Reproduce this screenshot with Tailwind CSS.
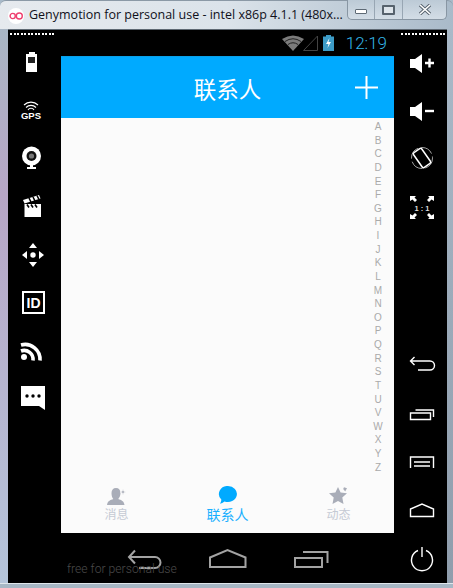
<!DOCTYPE html>
<html><head><meta charset="utf-8"><script src="https://cdn.jsdelivr.net/npm/@tailwindcss/browser@4"></script></head>
<body class="w-[453px] h-[588px] overflow-hidden bg-[#a9bac9]">
<div class="flex flex-col w-[453px] h-[588px]">
  <!-- title bar -->
  <div class="flex h-[29px] shrink-0 items-start bg-linear-to-r from-[#e6eaee] via-[#dbe3ea] to-[#a9bac9] border-t border-[#8b99a6] rounded-t-[6px]">
    <div class="flex items-center justify-center ml-[8px] mt-[7px] w-[16px] h-[16px] rounded-full bg-white shrink-0">
      <svg width="14" height="8" viewBox="0 0 14 8" fill="none" stroke="#ef3f6f" stroke-width="1.4"><circle cx="3.7" cy="4" r="2.6"/><circle cx="10.3" cy="4" r="3"/></svg>
    </div>
    <div class="ml-[5px] mt-[5px] w-[314px] whitespace-nowrap text-[12.5px] leading-[18px] text-[#10101a] font-['Open_Sans','Noto_Sans',sans-serif]">Genymotion for personal use - intel x86p 4.1.1 (480x...</div>
    <div class="flex ml-[4px] w-[100px] h-[20px] -mt-px border border-t-0 border-[#8896a3] rounded-b-[5px] bg-linear-to-b from-[#bccad6] to-[#d3dde6]">
      <div class="flex items-center justify-center w-[27px] border-r border-[#98a6b3]"><div class="w-[12px] h-[5px] bg-white border border-[#5e6a75] rounded-[1px] mt-[4px]"></div></div>
      <div class="flex items-center justify-center w-[28px] border-r border-[#98a6b3]"><div class="w-[13px] h-[10px] bg-white/40 border-2 border-[#56626d] rounded-[1px]"></div></div>
      <div class="flex items-center justify-center flex-1">
        <svg width="14" height="11" viewBox="0 0 14 11"><path d="M2 1 L12 10 M12 1 L2 10" stroke="#56626d" stroke-width="3.4"/><path d="M2 1 L12 10 M12 1 L2 10" stroke="#fff" stroke-width="1.6"/></svg>
      </div>
    </div>
  </div>
  <!-- body row -->
  <div class="flex h-[554px] shrink-0">
    <div class="w-[8px] shrink-0 bg-linear-to-b from-[#a9b6c4] via-[#b7a6c6] via-30% to-[#b4c4da]"></div>
    <div class="relative flex w-[439px] shrink-0 bg-black border-t border-[#5e6973]">
      <!-- left column -->
      <div class="w-[53px] shrink-0 pl-[9px] pt-[16px] flex flex-col items-start">
        <div class="flex gap-[1.5px] absolute left-[2px] top-[3px]"><i class="w-[2px] h-[2px] bg-white block"></i><i class="w-[2px] h-[2px] bg-white block"></i><i class="w-[2px] h-[2px] bg-white block"></i><i class="w-[2px] h-[2px] bg-white block"></i><i class="w-[2px] h-[2px] bg-white block"></i><i class="w-[2px] h-[2px] bg-white block"></i><i class="w-[2px] h-[2px] bg-white block"></i><i class="w-[2px] h-[2px] bg-white block"></i><i class="w-[2px] h-[2px] bg-white block"></i><i class="w-[2px] h-[2px] bg-white block"></i><i class="w-[2px] h-[2px] bg-white block"></i><i class="w-[2px] h-[2px] bg-white block"></i><i class="w-[2px] h-[2px] bg-white block"></i></div>
        <svg class="block" width="32" height="32" viewBox="0 0 32 32"><path fill="#fff" d="M12 6h6v2h2v18H9V8h3z"/><rect x="11" y="11" width="7" height="6" fill="#222"/></svg>
        <svg class="block mt-[16px]" width="32" height="32" viewBox="0 0 32 32" fill="none" stroke="#fff"><path stroke-width="1.1" d="M7 11a10 10 0 0 1 14 0M9 13.5a7 7 0 0 1 10 0M11 16a3.5 3.5 0 0 1 6 0"/><text x="14" y="25" text-anchor="middle" font-family="Liberation Sans" font-weight="700" font-size="9.5" fill="#fff" stroke="none">GPS</text></svg>
        <svg class="block mt-[16px]" width="32" height="32" viewBox="0 0 32 32"><circle cx="14.5" cy="14" r="9.5" fill="#fff"/><circle cx="14.5" cy="14" r="5" fill="#111"/><circle cx="14.5" cy="14" r="2.6" fill="#777"/><path fill="#fff" d="M13 22h3v3h3v2h-9v-2h3z"/></svg>
        <svg class="block mt-[16px]" width="32" height="32" viewBox="0 0 32 32"><path fill="#fff" d="M7.500 14h16.500v13H7.500z"/><path fill="#fff" d="M6 10 22 5l1.500 3.500-16 5z"/><path stroke="#000" stroke-width="1.6" d="M12 8l2 4M16 7l2 4M20 5.500l2 4M10 14.500l2 3M14 14.500l2 3M18 14.500l2 3"/></svg>
        <svg class="block mt-[17px]" width="32" height="32" viewBox="0 0 32 32" fill="#fff"><path d="M16 4l4 5h-8zM16 28l-4-5h8zM5 16l5-4v8zM27 16l-5 4v-8z"/><circle cx="16" cy="16" r="2.700"/></svg>
        <svg class="block mt-[16px]" width="32" height="32" viewBox="0 0 32 32"><rect x="6" y="5" width="21" height="21" fill="none" stroke="#fff" stroke-width="2"/><text x="16.500" y="21" text-anchor="middle" font-family="Liberation Sans" font-weight="700" font-size="14" fill="#fff">ID</text></svg>
        <svg class="block mt-[14px]" width="32" height="32" viewBox="0 0 32 32" fill="none" stroke="#fff" stroke-width="3.600"><path d="M4 12a15 15 0 0 1 19 15.500M4 18a9 9 0 0 1 12 9.500"/><circle cx="7" cy="24" r="3" fill="#fff" stroke="none"/></svg>
        <svg class="block mt-[17px]" width="32" height="32" viewBox="0 0 32 32"><path fill="#fff" d="M4 4h24v24l-6-4H4z"/><circle cx="10" cy="14" r="1.700" fill="#000"/><circle cx="16" cy="14" r="1.700" fill="#000"/><circle cx="22" cy="14" r="1.700" fill="#000"/></svg>
      </div>
      <!-- centre -->
      <div class="w-[333px] shrink-0 flex flex-col">
        <div class="h-[26px] shrink-0 flex items-center justify-end pr-[7px]">
          <svg width="38" height="16" viewBox="0 0 38 16" class="mr-[3px]"><path fill="#7c7c7c" d="M0 4 Q11 -3 22 4 L11 16z"/><path d="M3 6.500 Q11 1 19 6.500M6 9.500Q11 6 16 9.500" stroke="#222" stroke-width="1" fill="none"/><path d="M21.500 15.500 35.500 1v14.500z" fill="none" stroke="#444" stroke-width="1"/></svg>
          <svg width="11" height="16" viewBox="0 0 11 16" class="mr-[12px]"><path fill="#3d9cc7" d="M3 0h5v1.500h3V16H0V1.500h3z"/><path fill="#fff" d="M6.500 3 3 9h2.500L4.500 13 8 7H5.500z"/></svg>
          <div class="text-[17px] leading-[20px] text-[#33b5e5] font-['Roboto',sans-serif] font-light">12:19</div>
        </div>
        <div class="h-[62px] shrink-0 relative flex items-center justify-center bg-[#00aaff] border-t border-[#0aa0e8]">
          <div class="text-[22.5px] leading-[30px] text-white font-['Noto_Sans_CJK_SC',sans-serif]">联系人</div>
          <svg class="absolute right-[16px] top-[19px]" width="23" height="23" viewBox="0 0 23 23"><path d="M0 11.500H23M11.500 0V23" stroke="#fff" stroke-width="2"/></svg>
        </div>
        <div class="h-[356px] shrink-0 flex justify-end bg-[#fbfbfb]">
          <div class="w-[16px] mr-[8px] pt-[4px] pb-[1px] flex flex-col justify-between items-center text-[10px] leading-[10px] text-[#aaaaaa] font-['Liberation_Sans',sans-serif]">
            <span>A</span><span>B</span><span>C</span><span>D</span><span>E</span><span>F</span><span>G</span><span>H</span><span>I</span><span>J</span><span>K</span><span>L</span><span>M</span><span>N</span><span>O</span><span>P</span><span>Q</span><span>R</span><span>S</span><span>T</span><span>U</span><span>V</span><span>W</span><span>X</span><span>Y</span><span>Z</span>
          </div>
        </div>
        <div class="h-[59px] shrink-0 grid grid-cols-3 bg-[#fbfbfb] font-['Noto_Sans_CJK_SC',sans-serif]">
          <div class="flex flex-col items-center pt-[13px]">
            <svg width="20" height="19" viewBox="0 0 20 19"><path fill="#a9adb8" d="M9 1c3 0 4.500 2 4.500 5s-1.300 5-2.300 6c3 1 5.800 2 6.300 6H0c.5-4 3.300-5 6.300-6C5.300 11 4.500 9 4.500 6S6 1 9 1z"/><path fill="#a9adb8" d="M16 2l.8 2.200L19 5l-2.200.8L16 8l-.8-2.200L13 5l2.200-.8z" stroke="#fbfbfb" stroke-width=".6"/></svg>
            <div class="text-[12px] leading-[16px] text-[#c5cad4]">消息</div>
          </div>
          <div class="flex flex-col items-center pt-[12px]">
            <svg width="20" height="19" viewBox="0 0 20 19"><path fill="#00aaff" d="M10 0a9 8 0 1 1-3.500 15.400C5 16.500 3.500 17.300 2 17.800c.8-1.300 1.400-2.800 1.300-4.300A8.500 8 0 0 1 10 0z"/></svg>
            <div class="text-[14px] leading-[18px] text-[#1ab0ff]">联系人</div>
          </div>
          <div class="flex flex-col items-center pt-[13px]">
            <svg width="20" height="19" viewBox="0 0 20 19"><path fill="#a9adb8" d="M9 0l2.600 5.500 6.400.8-4.700 4.300 1.200 6.400L9 14l-5.500 3 1.200-6.400L0 6.300l6.400-.8z"/><path fill="#fbfbfb" d="M13 0h6v4l-3 1z"/><path fill="#a9adb8" d="M15 .2l3 1-1.800 3.200-2-2.300z"/></svg>
            <div class="text-[12px] leading-[16px] text-[#c5cad4]">动态</div>
          </div>
        </div>
        <div class="h-[51px] shrink-0 relative">
          <svg class="absolute left-0 top-0" width="333" height="50" viewBox="0 0 333 50" fill="none" stroke="#a3a3a3" stroke-width="2">
            <path d="M74 17.500 68 24 74 30.500M68 24H94a5.500 5.500 0 0 1 0 11H78"/>
            <path d="M149 34V24.500L166.500 17l18 7.500V34z"/>
            <path d="M234 25h27v9h-27zM242 19h24.500v11"/>
          </svg>
          <div class="absolute left-[6px] top-[29px] text-[12.2px] leading-[14px] text-[#4a4a4a] font-['Roboto',sans-serif] font-light whitespace-nowrap">free for personal use</div>
        </div>
      </div>
      <!-- right column -->
      <div class="flex-1 pl-[12px] pt-[17px] flex flex-col items-start">
        <div class="flex gap-[1.5px] absolute right-[2px] top-[3px]"><i class="w-[2px] h-[2px] bg-white block"></i><i class="w-[2px] h-[2px] bg-white block"></i><i class="w-[2px] h-[2px] bg-white block"></i><i class="w-[2px] h-[2px] bg-white block"></i><i class="w-[2px] h-[2px] bg-white block"></i><i class="w-[2px] h-[2px] bg-white block"></i><i class="w-[2px] h-[2px] bg-white block"></i><i class="w-[2px] h-[2px] bg-white block"></i><i class="w-[2px] h-[2px] bg-white block"></i><i class="w-[2px] h-[2px] bg-white block"></i><i class="w-[2px] h-[2px] bg-white block"></i><i class="w-[2px] h-[2px] bg-white block"></i><i class="w-[2px] h-[2px] bg-white block"></i></div>
        <svg class="block" width="32" height="32" viewBox="0 0 32 32"><path fill="#fff" d="M4 12h5l7-5v19l-7-5H4z"/><path stroke="#fff" stroke-width="2.400" d="M19 16h9M23.500 11.500v9"/></svg>
        <svg class="block mt-[16px]" width="32" height="32" viewBox="0 0 32 32"><path fill="#fff" d="M4 12h5l7-5v19l-7-5H4z"/><path stroke="#fff" stroke-width="2.400" d="M19 16h9"/></svg>
        <svg class="block mt-[15px]" width="32" height="32" viewBox="0 0 32 32" fill="none" stroke="#fff"><circle cx="16" cy="16" r="10.500" stroke-width=".8" stroke-dasharray="13 3" stroke="#ccc"/><rect x="11" y="7" width="10" height="18" rx="1.500" transform="rotate(-35 16 16)" stroke-width="1.500"/></svg>
        <svg class="block mt-[17px]" width="32" height="32" viewBox="0 0 32 32" fill="#fff"><path d="M4 5h6l-1.500 1.500L11 9l-2 2-2.500-2.500L4 10zM28 5h-6l1.500 1.500L21 9l2 2 2.500-2.500L28 10zM4 28h6l-1.500-1.500L11 24l-2-2-2.500 2.500L4 23zM28 28h-6l1.500-1.500L21 24l2-2 2.500 2.500L28 23z"/><text x="16" y="19.500" text-anchor="middle" font-family="Liberation Sans" font-weight="700" font-size="7.500" fill="#ddd">1 : 1</text></svg>
        <svg class="block mt-[126px]" width="32" height="32" viewBox="0 0 32 32" fill="none" stroke="#fff" stroke-width="1.400"><path d="M8.500 9 4.500 13 8.500 17M5 13H24a4.500 4.500 0 0 1 0 9H12" transform="translate(0 -1)"/></svg>
        <svg class="block mt-[17px]" width="32" height="32" viewBox="0 0 32 32" fill="none" stroke="#fff" stroke-width="1.400"><path d="M4.500 15h20v6.500h-20zM9.500 12H27.500v7"/></svg>
        <svg class="block mt-[16px]" width="32" height="32" viewBox="0 0 32 32" fill="none" stroke="#fff" stroke-width="1.400"><path d="M4.500 22V11h23v11M8 16h16M8 20h16"/></svg>
        <svg class="block mt-[16px]" width="32" height="32" viewBox="0 0 32 32" fill="none" stroke="#fff" stroke-width="1.400"><path d="M4.500 22.500V15L16 10l11.500 5v7.500z"/></svg>
        <svg class="block mt-[16px]" width="32" height="32" viewBox="0 0 32 32" fill="none" stroke="#fff" stroke-width="1.400"><path d="M12 8.500a10.500 10.500 0 1 0 8 0M16 5V15"/></svg>
      </div>
    </div>
    <div class="flex-1 bg-linear-to-b from-[#a9b9c8] to-[#8f9dac]"></div>
  </div>
  <div class="flex-1 bg-[#a7b7c5] border-t border-[#dfe6ec]"></div>
</div>
</body></html>
